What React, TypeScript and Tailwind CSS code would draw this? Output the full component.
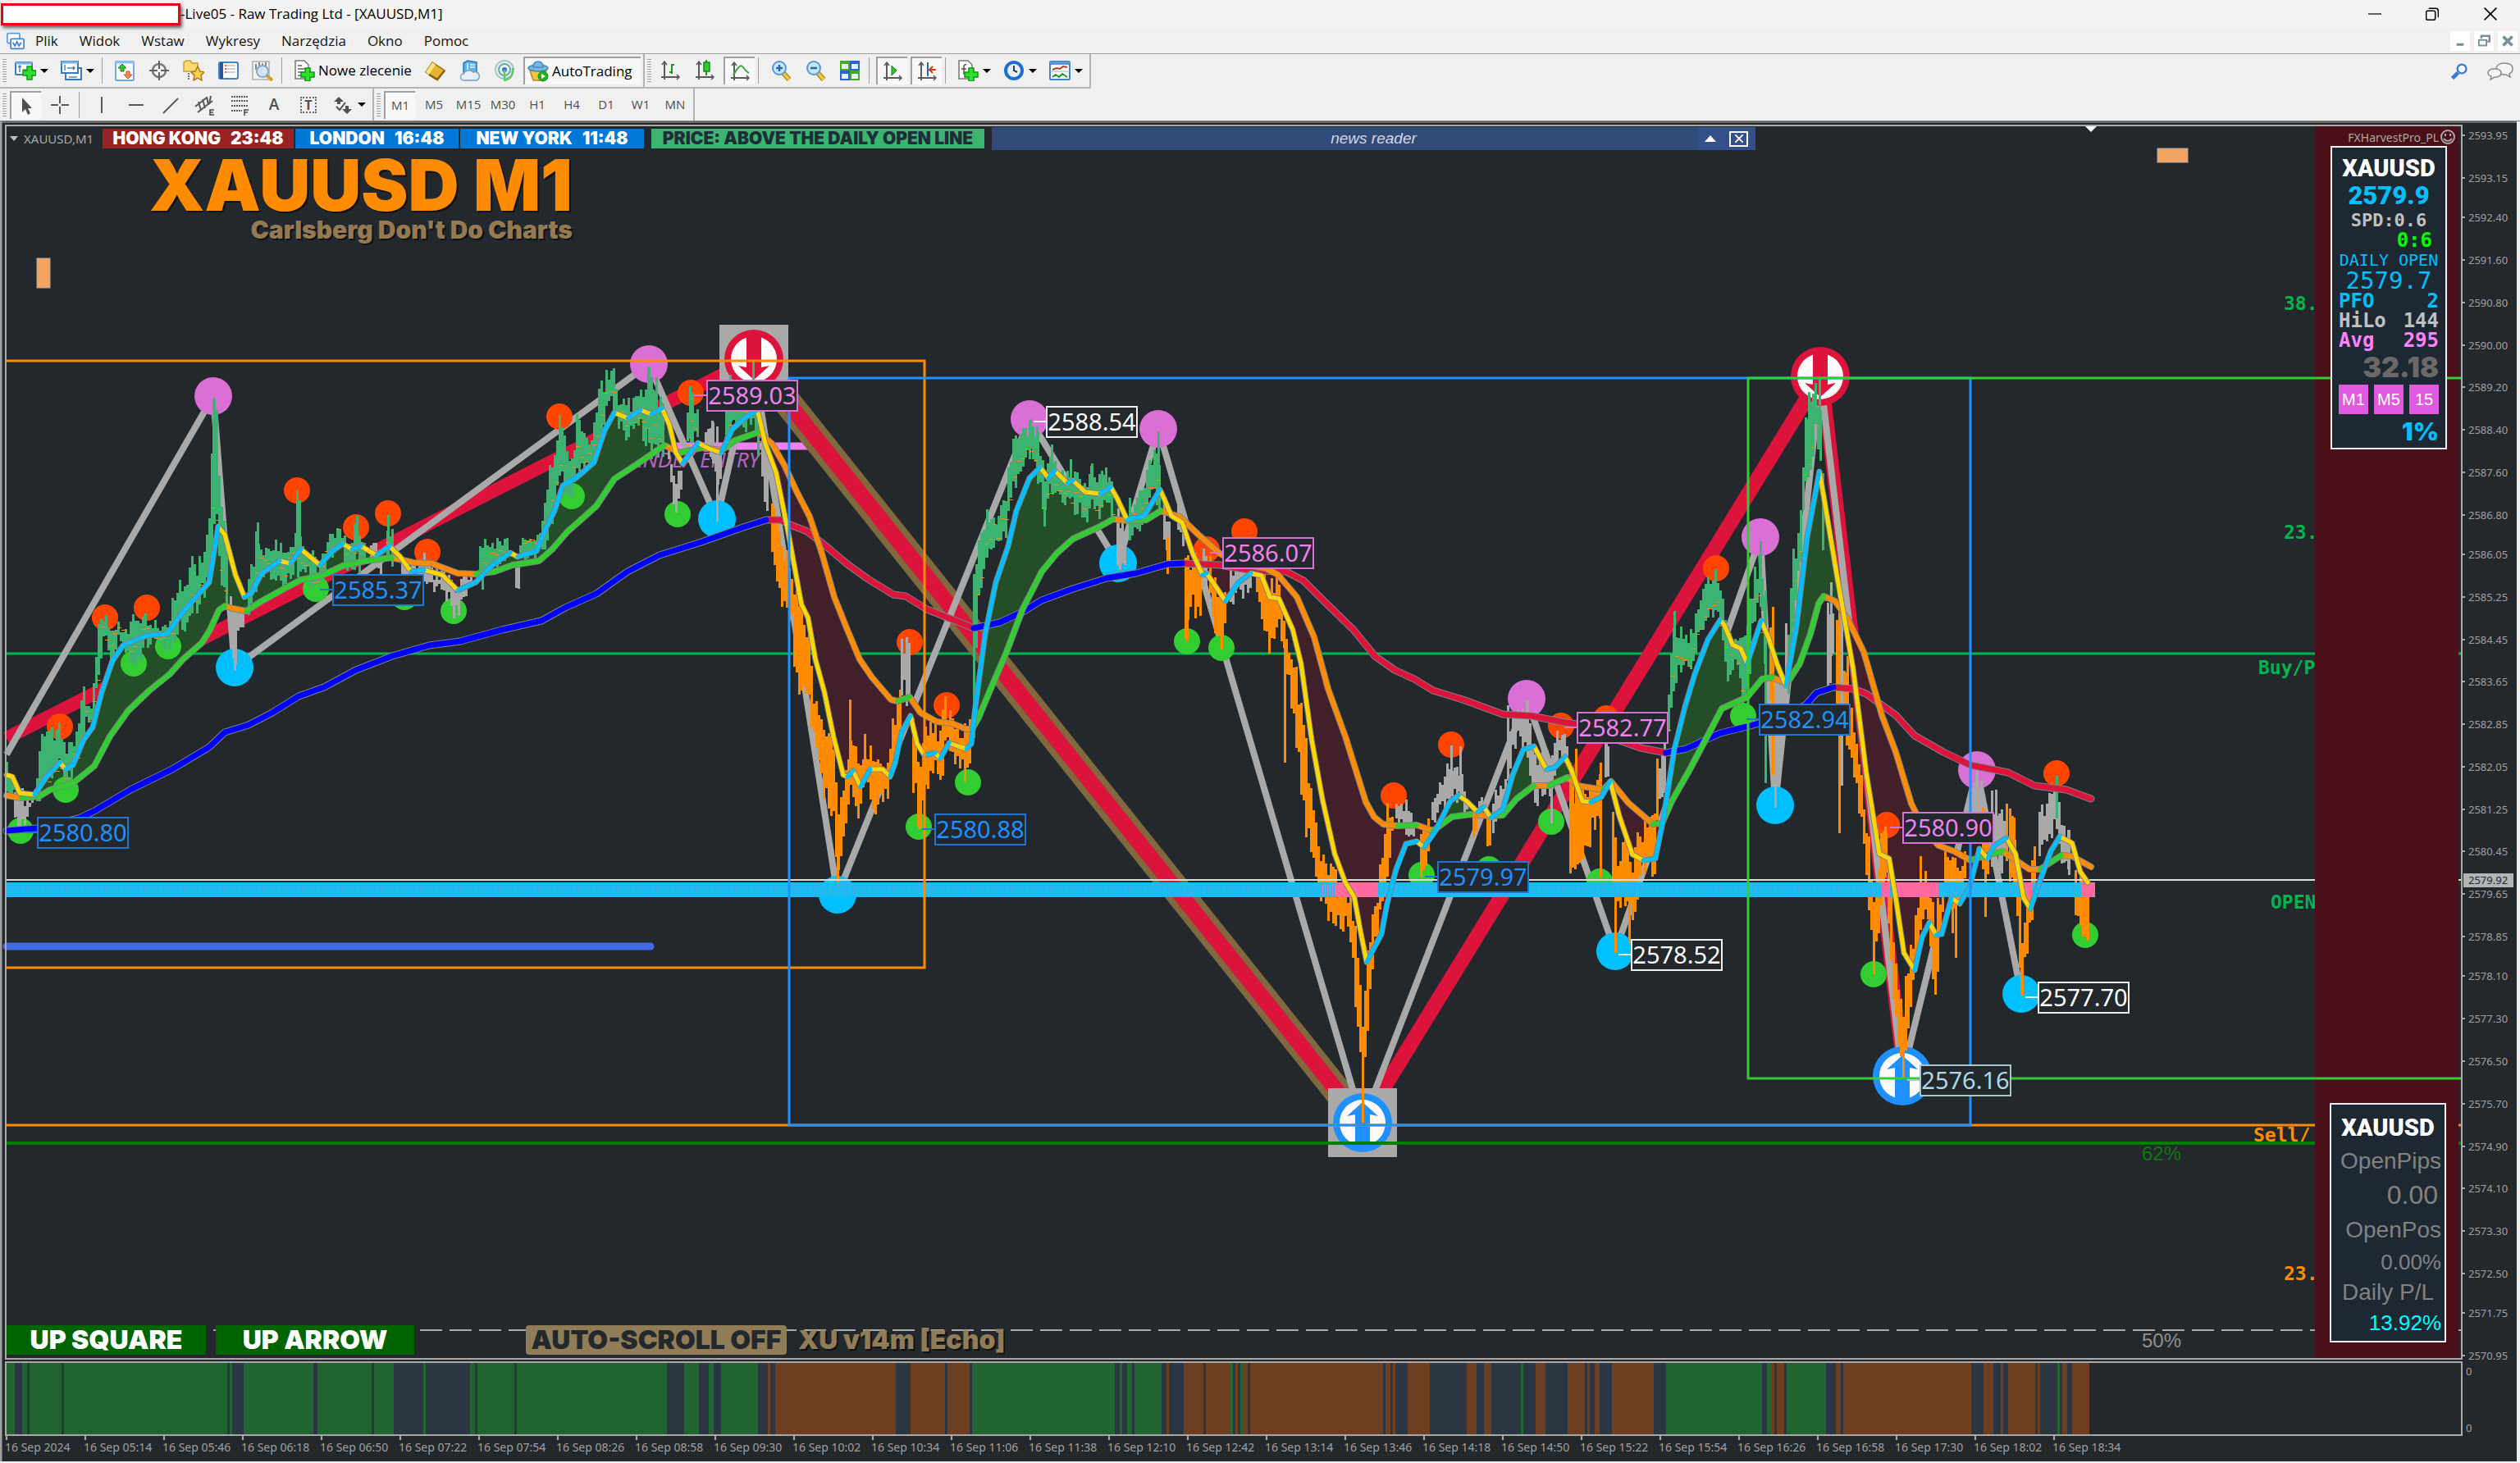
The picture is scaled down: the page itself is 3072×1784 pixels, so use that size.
import React from 'react';

type Point = [number, number];
type Candle = [number, number, number];

const GREEN = '#3cb371';
const GRAY = '#a9a9a9';
const ORANGE = '#ff8c00';

const fastMa: Point[] = [
  [8, 945], [15, 947], [24, 967], [42, 969], [57, 947], [73, 930], [80, 938], [89, 933], [102, 902], [113, 887], [124, 844], [137, 806],
  [150, 787], [179, 775], [204, 773], [220, 750], [239, 728], [255, 710], [266, 642], [274, 652], [287, 701], [298, 728], [306, 724],
  [319, 699], [341, 684], [354, 687], [367, 670], [390, 689], [405, 672], [418, 663], [429, 670], [440, 666], [459, 677], [475, 666],
  [488, 679], [501, 697], [517, 695], [539, 701], [558, 720], [580, 710], [599, 690], [622, 674], [631, 679], [654, 672], [666, 643],
  [676, 623], [686, 592], [702, 583], [724, 564], [737, 525], [749, 503], [765, 510], [781, 500], [794, 505], [807, 498], [816, 518],
  [824, 552], [832, 565], [851, 540], [864, 547], [879, 552], [893, 523], [909, 509], [922, 501], [924, 503], [933, 541], [946, 576],
  [961, 650], [977, 737], [985, 753], [994, 804], [1005, 844], [1016, 898], [1028, 945], [1033, 947], [1040, 940], [1049, 959],
  [1061, 938], [1076, 938], [1085, 947], [1091, 931], [1099, 893], [1110, 873], [1118, 907], [1127, 921], [1140, 918], [1146, 925],
  [1157, 906], [1168, 910], [1178, 913], [1184, 907], [1189, 862], [1201, 773], [1214, 710], [1229, 666], [1239, 623], [1255, 583],
  [1268, 570], [1278, 583], [1286, 574], [1301, 589], [1308, 586], [1323, 600], [1341, 602], [1354, 594], [1362, 608], [1374, 634],
  [1395, 629], [1414, 597], [1420, 610], [1428, 629], [1441, 637], [1454, 675], [1466, 701], [1471, 699], [1494, 733], [1510, 710],
  [1525, 699], [1538, 702], [1548, 728], [1559, 730], [1576, 768], [1586, 809], [1599, 902], [1612, 974], [1627, 1041], [1640, 1076],
  [1651, 1094], [1658, 1133], [1666, 1173], [1676, 1154], [1684, 1139], [1691, 1102], [1702, 1060], [1714, 1029], [1727, 1026],
  [1736, 1033], [1750, 1013], [1768, 977], [1778, 970], [1788, 977], [1801, 990], [1809, 984], [1817, 997], [1832, 987], [1844, 945],
  [1857, 914], [1870, 910], [1885, 938], [1895, 936], [1908, 923], [1916, 940], [1929, 977], [1939, 978], [1952, 972], [1963, 953],
  [1974, 995], [1990, 1042], [2003, 1049], [2018, 1047], [2028, 997], [2041, 914], [2054, 862], [2066, 822], [2082, 780], [2097, 756],
  [2102, 762], [2112, 786], [2122, 791], [2130, 809], [2147, 757], [2156, 778], [2166, 809], [2177, 836], [2190, 764], [2203, 655],
  [2218, 575], [2223, 604], [2239, 700], [2259, 815], [2275, 942], [2291, 1041], [2303, 1047], [2311, 1095], [2321, 1162],
  [2334, 1183], [2343, 1143], [2352, 1125], [2360, 1140], [2367, 1139], [2379, 1095], [2389, 1102], [2401, 1082], [2413, 1035],
  [2423, 1047], [2431, 1031], [2446, 1022], [2457, 1041], [2467, 1095], [2475, 1108], [2484, 1082], [2500, 1038], [2511, 1020],
  [2526, 1028], [2536, 1063], [2545, 1076],
];

const slowMa: Point[] = [
  [8, 970], [26, 973], [48, 971], [61, 963], [89, 955], [115, 934], [134, 898], [156, 867], [182, 842], [207, 822], [223, 804],
  [246, 784], [256, 768], [267, 744], [274, 739], [284, 742], [300, 745], [319, 733], [348, 717], [367, 707], [392, 702], [418, 690],
  [446, 684], [478, 680], [504, 686], [526, 687], [558, 699], [580, 700], [603, 697], [625, 689], [657, 684], [673, 670], [692, 648],
  [708, 634], [727, 617], [749, 584], [775, 567], [810, 543], [829, 552], [855, 546], [880, 549], [896, 537], [925, 527], [941, 541],
  [956, 567], [971, 599], [987, 630], [1002, 675], [1017, 728], [1033, 768], [1048, 804], [1063, 826], [1086, 853], [1094, 855],
  [1109, 850], [1122, 869], [1142, 880], [1160, 882], [1178, 889], [1185, 889], [1193, 875], [1206, 844], [1227, 795], [1247, 742],
  [1270, 697], [1288, 675], [1308, 657], [1339, 643], [1357, 633], [1374, 635], [1397, 634], [1415, 623], [1438, 630], [1461, 652],
  [1487, 675], [1512, 688], [1543, 693], [1558, 701], [1581, 728], [1602, 777], [1619, 840], [1640, 898], [1665, 978], [1675, 996],
  [1686, 1005], [1704, 1007], [1727, 1006], [1747, 1013], [1770, 996], [1793, 993], [1816, 995], [1832, 994], [1849, 974],
  [1870, 958], [1888, 958], [1911, 948], [1923, 958], [1954, 963], [1964, 953], [1985, 979], [2015, 1005], [2026, 1004], [2038, 977],
  [2059, 940], [2084, 893], [2099, 864], [2130, 850], [2148, 828], [2161, 826], [2178, 834], [2194, 809], [2207, 773], [2217, 736],
  [2223, 727], [2237, 733], [2252, 754], [2272, 795], [2294, 872], [2311, 917], [2330, 980], [2345, 1010], [2363, 1031],
  [2382, 1038], [2402, 1049], [2441, 1038], [2474, 1060], [2487, 1060], [2513, 1043], [2526, 1044], [2549, 1057],
];

const longMa: Point[] = [
  [8, 1013], [45, 1010], [96, 998], [115, 989], [159, 963], [210, 938], [255, 911], [274, 893], [303, 884], [332, 869], [364, 849],
  [395, 838], [434, 817], [478, 800], [523, 787], [561, 782], [612, 768], [660, 757], [689, 741], [727, 724], [765, 697], [804, 677],
  [855, 661], [906, 643], [934, 634], [951, 634], [966, 641], [984, 648], [1007, 666], [1033, 688], [1058, 706], [1089, 725],
  [1104, 727], [1130, 743], [1160, 755], [1187, 766], [1219, 759], [1247, 746], [1270, 732], [1308, 718], [1349, 705], [1385, 699],
  [1423, 688], [1441, 687], [1487, 689], [1528, 696], [1568, 697], [1589, 708], [1614, 733], [1650, 768], [1676, 800], [1700, 817],
  [1724, 828], [1747, 842], [1786, 854], [1832, 871], [1867, 873], [1908, 881], [1923, 883], [1974, 903], [2000, 912], [2031, 918],
  [2056, 913], [2097, 894], [2130, 886], [2144, 882], [2176, 874], [2202, 859], [2214, 845], [2235, 838], [2259, 840], [2275, 846],
  [2311, 872], [2334, 897], [2369, 917], [2402, 933], [2448, 942], [2480, 958], [2519, 963], [2549, 974],
];

// x, high, low
const candleRuns: { color: string; bars: Candle[] }[] = [
  { color: GREEN, bars: [[8, 935, 965], [17, 950, 968]] },
  { color: GRAY, bars: [[18, 965, 1000], [25, 975, 1008], [35, 975, 990], [42, 965, 975]] },
  { color: GREEN, bars: [[45, 945, 970], [52, 905, 960], [65, 905, 950], [73, 892, 935], [80, 925, 955], [90, 905, 935], [98, 860, 920], [102, 850, 885], [112, 865, 878], [118, 775, 850], [125, 765, 785], [130, 755, 780], [133, 762, 810], [145, 766, 778], [155, 765, 790], [160, 765, 805], [178, 752, 785], [190, 765, 780], [200, 772, 785], [210, 740, 790], [217, 705, 760], [222, 730, 770], [233, 685, 740], [240, 700, 735], [250, 670, 715], [257, 600, 690], [260, 500, 640], [263, 520, 620], [268, 610, 690], [275, 660, 730], [278, 700, 780]] },
  { color: GRAY, bars: [[281, 740, 780], [286, 750, 815], [290, 745, 780], [298, 730, 760]] },
  { color: GREEN, bars: [[303, 710, 750], [308, 690, 730], [313, 645, 700], [320, 670, 700], [330, 665, 695], [340, 665, 700], [348, 682, 712], [355, 670, 695], [362, 650, 690], [375, 672, 700], [385, 692, 720], [395, 680, 700], [400, 652, 680], [415, 650, 662], [425, 665, 695], [435, 645, 685], [445, 660, 685]] },
  { color: GRAY, bars: [[452, 662, 690], [465, 672, 695]] },
  { color: GREEN, bars: [[472, 640, 680], [480, 658, 685]] },
  { color: GRAY, bars: [[490, 682, 700], [505, 690, 712], [515, 680, 700], [523, 690, 712], [530, 702, 725], [540, 700, 712], [550, 708, 740], [556, 722, 745], [562, 710, 735], [575, 697, 715]] },
  { color: GREEN, bars: [[585, 672, 710], [592, 658, 700], [605, 662, 690], [620, 658, 680]] },
  { color: GRAY, bars: [[629, 680, 710]] },
  { color: GREEN, bars: [[634, 665, 680], [650, 660, 675], [660, 640, 670], [668, 582, 640], [675, 570, 615], [683, 512, 570], [690, 550, 600], [697, 560, 600], [703, 520, 560], [712, 535, 565], [722, 538, 560], [730, 482, 540], [738, 465, 495], [748, 455, 480], [755, 492, 520], [765, 500, 530], [775, 484, 515], [785, 490, 525], [791, 460, 535], [800, 480, 540], [808, 495, 545]] },
  { color: GRAY, bars: [[815, 540, 570], [820, 590, 615], [826, 592, 622], [832, 560, 600]] },
  { color: GREEN, bars: [[838, 495, 545], [843, 480, 530], [850, 505, 540]] },
  { color: GRAY, bars: [[860, 530, 560], [868, 525, 560], [875, 560, 600], [880, 550, 580]] },
  { color: GREEN, bars: [[885, 500, 540], [893, 470, 520], [905, 490, 520], [918, 470, 505], [925, 490, 550]] },
  { color: GRAY, bars: [[929, 520, 590], [936, 545, 630]] },
  { color: ORANGE, bars: [[941, 600, 660], [950, 650, 725], [965, 705, 760], [972, 740, 840], [985, 770, 850], [993, 855, 915], [1003, 900, 960], [1015, 910, 990], [1021, 990, 1065], [1030, 960, 1000], [1036, 900, 950], [1045, 935, 1000], [1055, 915, 950], [1065, 928, 980], [1080, 932, 970], [1090, 880, 925], [1097, 835, 880]] },
  { color: GRAY, bars: [[1099, 792, 838], [1108, 790, 845]] },
  { color: ORANGE, bars: [[1113, 870, 950], [1121, 960, 1005], [1128, 900, 960], [1138, 890, 930], [1145, 890, 960], [1153, 865, 910], [1165, 880, 920], [1178, 900, 950], [1183, 885, 940]] },
  { color: GREEN, bars: [[1187, 730, 880], [1192, 680, 740], [1200, 630, 690], [1205, 635, 660], [1215, 645, 660], [1225, 610, 650], [1235, 550, 595], [1243, 540, 575], [1255, 520, 550], [1265, 535, 575], [1273, 580, 630], [1280, 560, 600], [1292, 580, 605], [1303, 580, 615], [1315, 590, 620], [1325, 600, 630], [1330, 578, 610], [1340, 592, 630], [1348, 580, 600], [1357, 590, 635]] },
  { color: GRAY, bars: [[1362, 630, 680], [1372, 650, 690]] },
  { color: GREEN, bars: [[1377, 620, 650], [1390, 610, 640], [1400, 575, 615], [1408, 560, 600], [1414, 560, 610]] },
  { color: GRAY, bars: [[1419, 615, 650], [1425, 650, 680]] },
  { color: GRAY, bars: [[1436, 610, 650], [1442, 640, 670]] },
  { color: ORANGE, bars: [[1445, 680, 760], [1450, 685, 740], [1463, 685, 735]] },
  { color: GRAY, bars: [[1467, 670, 705]] },
  { color: ORANGE, bars: [[1475, 690, 730], [1487, 740, 790], [1495, 700, 750]] },
  { color: GRAY, bars: [[1500, 692, 730], [1525, 692, 715]] },
  { color: ORANGE, bars: [[1532, 690, 718], [1543, 720, 785], [1553, 725, 770], [1560, 712, 760], [1567, 770, 810], [1577, 810, 870], [1588, 880, 980], [1600, 990, 1050], [1610, 1040, 1085], [1628, 1080, 1130], [1640, 1090, 1120], [1650, 1120, 1190], [1656, 1190, 1270], [1661, 1250, 1340], [1666, 1175, 1260], [1672, 1120, 1170], [1680, 1090, 1130], [1690, 1000, 1070], [1697, 990, 1020]] },
  { color: GRAY, bars: [[1702, 972, 1000], [1715, 985, 1010], [1725, 1002, 1020]] },
  { color: ORANGE, bars: [[1732, 1015, 1055], [1741, 1000, 1035]] },
  { color: GRAY, bars: [[1746, 975, 1005], [1760, 950, 980], [1768, 930, 965], [1780, 950, 975], [1790, 980, 1000]] },
  { color: ORANGE, bars: [[1796, 988, 1015]] },
  { color: GRAY, bars: [[1803, 975, 995]] },
  { color: ORANGE, bars: [[1813, 995, 1030], [1817, 995, 1050]] },
  { color: GRAY, bars: [[1820, 982, 1010], [1835, 950, 975], [1840, 885, 930], [1850, 872, 900], [1862, 870, 920], [1872, 930, 970], [1880, 920, 970], [1890, 930, 960], [1900, 892, 920], [1910, 910, 930]] },
  { color: ORANGE, bars: [[1914, 945, 1050], [1925, 985, 1050], [1933, 965, 1030], [1945, 945, 1000], [1950, 950, 1000]] },
  { color: GRAY, bars: [[1957, 910, 940], [1962, 915, 940]] },
  { color: ORANGE, bars: [[1966, 985, 1090], [1971, 1050, 1110], [1980, 1020, 1090], [1988, 1060, 1120], [2000, 1020, 1070], [2010, 1010, 1050], [2018, 1000, 1070]] },
  { color: GRAY, bars: [[2023, 930, 980], [2030, 900, 960]] },
  { color: GREEN, bars: [[2034, 845, 895], [2041, 765, 820], [2050, 780, 815], [2060, 775, 815], [2070, 742, 780], [2078, 715, 760], [2091, 705, 740], [2098, 720, 760], [2107, 780, 825], [2115, 772, 800], [2125, 800, 855], [2130, 760, 850], [2137, 715, 760], [2146, 680, 720], [2151, 740, 820]] },
  { color: ORANGE, bars: [[2158, 780, 860], [2161, 800, 900]] },
  { color: GRAY, bars: [[2164, 850, 960], [2169, 820, 910], [2175, 810, 845]] },
  { color: GREEN, bars: [[2180, 770, 840], [2185, 690, 760], [2195, 640, 690], [2200, 510, 600], [2207, 500, 560], [2213, 485, 530], [2218, 490, 540], [2223, 600, 700]] },
  { color: GRAY, bars: [[2228, 740, 830], [2235, 740, 800]] },
  { color: ORANGE, bars: [[2239, 760, 880], [2248, 820, 880], [2258, 880, 930], [2268, 950, 1000], [2278, 1030, 1100], [2284, 1120, 1180], [2292, 1030, 1110], [2299, 1015, 1060], [2305, 1090, 1180], [2312, 1200, 1265], [2319, 1250, 1300], [2325, 1190, 1250], [2332, 1150, 1200], [2340, 1080, 1130], [2348, 1060, 1110], [2358, 1130, 1200], [2365, 1100, 1150], [2372, 1040, 1070], [2380, 1050, 1120], [2388, 1070, 1110], [2397, 1030, 1070]] },
  { color: GRAY, bars: [[2403, 985, 1030], [2408, 960, 1000], [2415, 960, 1010]] },
  { color: ORANGE, bars: [[2420, 1020, 1080]] },
  { color: GRAY, bars: [[2428, 980, 1040], [2443, 1000, 1050]] },
  { color: ORANGE, bars: [[2450, 1005, 1060], [2458, 1030, 1110], [2465, 1150, 1200], [2472, 1090, 1150], [2480, 1050, 1095]] },
  { color: GRAY, bars: [[2486, 1000, 1035], [2500, 975, 1010], [2508, 960, 1000], [2515, 1020, 1055], [2524, 1025, 1060]] },
  { color: ORANGE, bars: [[2530, 1070, 1120], [2547, 1085, 1135]] },
];

// long single wicks: x, from, to
const wicks: [string, number, number, number][] = [
  [GREEN, 260, 485, 620], [GREEN, 264, 500, 600], [GRAY, 286, 740, 818], [GREEN, 362, 598, 680], [GREEN, 365, 610, 670],
  [GREEN, 473, 628, 680], [GREEN, 314, 637, 700], [GREEN, 682, 510, 580], [GREEN, 703, 505, 570], [GREEN, 748, 449, 500],
  [GREEN, 791, 447, 540], [GREEN, 794, 460, 560], [GREEN, 800, 460, 540], [GREEN, 842, 480, 540], [GRAY, 874, 520, 636],
  [GRAY, 868, 513, 560], [GRAY, 22, 970, 1010], [GREEN, 918, 440, 510], [GREEN, 890, 457, 520], [ORANGE, 1021, 1000, 1091],
  [ORANGE, 1036, 853, 930], [ORANGE, 1054, 895, 950], [ORANGE, 1120, 980, 1011], [GRAY, 1108, 784, 850], [GREEN, 1187, 700, 900],
  [GREEN, 1203, 621, 680], [GREEN, 1255, 514, 560], [GREEN, 1264, 520, 570], [GREEN, 1282, 542, 600], [GREEN, 1305, 560, 600],
  [GREEN, 1330, 568, 600], [GREEN, 1348, 570, 600], [GREEN, 1412, 526, 600], [GREEN, 1273, 590, 642], [GRAY, 1363, 620, 690],
  [ORANGE, 1423, 655, 700], [ORANGE, 1447, 700, 782], [ORANGE, 1489, 740, 792], [ORANGE, 1661, 1280, 1369], [ORANGE, 1667, 1180, 1250],
  [GRAY, 1769, 909, 960], [GRAY, 1780, 910, 970], [GRAY, 1861, 853, 900], [GRAY, 1838, 860, 920], [GRAY, 1891, 940, 1004],
  [ORANGE, 1921, 913, 1040], [ORANGE, 1951, 930, 1070], [ORANGE, 1969, 1060, 1162], [ORANGE, 1986, 1080, 1150], [GRAY, 1958, 880, 940],
  [ORANGE, 2020, 925, 1000], [GREEN, 2041, 745, 820], [GREEN, 2091, 694, 740], [GREEN, 2146, 660, 740], [GREEN, 2152, 720, 955],
  [ORANGE, 2161, 740, 945], [GRAY, 2164, 830, 985], [GRAY, 2177, 760, 840], [GREEN, 2218, 462, 540], [GREEN, 2205, 478, 540],
  [ORANGE, 2242, 720, 1016], [GRAY, 2245, 740, 958], [GRAY, 2232, 710, 800], [ORANGE, 2252, 800, 880], [ORANGE, 2284, 1100, 1188],
  [ORANGE, 2298, 1008, 1070], [ORANGE, 2320, 1240, 1314], [ORANGE, 2341, 1044, 1120], [ORANGE, 2359, 1140, 1213], [ORANGE, 2384, 1060, 1168],
  [GRAY, 2410, 940, 1000], [GRAY, 2433, 963, 1040], [ORANGE, 2417, 985, 1060], [ORANGE, 2446, 980, 1050], [ORANGE, 2455, 997, 1080],
  [ORANGE, 2464, 1150, 1214], [ORANGE, 2420, 1060, 1118], [GREEN, 2507, 946, 998], [GRAY, 2501, 968, 1010], [GRAY, 2521, 1012, 1060],
  [ORANGE, 2542, 1100, 1142], [ORANGE, 1566, 790, 930], [ORANGE, 1592, 900, 998],
];

const dots: [string, number, Point[]][] = [
  ['#da70d6', 23, [[260, 483], [791, 444], [1255, 511], [1412, 523], [1861, 852], [2146, 655], [2410, 939]]],
  ['#00bfff', 23, [[286, 814], [874, 633], [1363, 687], [1021, 1091], [1969, 1160], [2164, 982], [2464, 1212]]],
  ['#ff4500', 16, [[73, 886], [128, 753], [179, 741], [362, 598], [434, 643], [473, 626], [521, 673], [682, 508], [842, 479], [1109, 783], [1154, 860], [1471, 670], [1517, 648], [1699, 970], [1769, 908], [1903, 885], [1958, 876], [2092, 693], [2300, 1006], [2507, 943]]],
  ['#32cd32', 16, [[25, 1013], [80, 963], [163, 809], [205, 788], [385, 718], [493, 728], [553, 745], [697, 605], [826, 627], [1120, 1008], [1180, 954], [1447, 782], [1489, 790], [1733, 1067], [1815, 1060], [1891, 1002], [1950, 1075], [2125, 873], [2284, 1188], [2542, 1140]]],
];

const zigzag = '8,920 260,483 286,814 791,444 874,633 918,438 1021,1091 1255,511 1363,687 1412,523 1661,1369 1861,852 1969,1160 2146,655 2164,982 2219,459 2319,1312 2410,939 2464,1212';

// left, top, colour, text, text colour
const tags: [number, number, string, string, string][] = [
  [862, 464, '#da70d6', '2589.03', '#ee82ee'],
  [406, 701, '#1e78d2', '2585.37', '#1e90ff'],
  [46, 997, '#1e78d2', '2580.80', '#1e90ff'],
  [1276, 496, '#f0f0f0', '2588.54', '#ffffff'],
  [1491, 656, '#da70d6', '2586.07', '#ee82ee'],
  [1140, 993, '#1e78d2', '2580.88', '#1e90ff'],
  [1923, 869, '#da70d6', '2582.77', '#ee82ee'],
  [1753, 1051, '#1e78d2', '2579.97', '#1e90ff'],
  [1989, 1146, '#f0f0f0', '2578.52', '#ffffff'],
  [2145, 859, '#1e78d2', '2582.94', '#1e90ff'],
  [2320, 991, '#da70d6', '2580.90', '#ee82ee'],
  [2485, 1198, '#f0f0f0', '2577.70', '#ffffff'],
  [2341, 1299, '#a5c8c8', '2576.16', '#add8e6'],
];

const prices = [
  '2593.95', '2593.15', '2592.40', '2591.60', '2590.80', '2590.00', '2589.20', '2588.40', '2587.60', '2586.80', '2586.05', '2585.25',
  '2584.45', '2583.65', '2582.85', '2582.05', '2581.25', '2580.45', '2579.65', '2578.85', '2578.10', '2577.30', '2576.50', '2575.70',
  '2574.90', '2574.10', '2573.30', '2572.50', '2571.75', '2570.95',
];

const times = [
  '16 Sep 2024', '16 Sep 05:14', '16 Sep 05:46', '16 Sep 06:18', '16 Sep 06:50', '16 Sep 07:22', '16 Sep 07:54', '16 Sep 08:26',
  '16 Sep 08:58', '16 Sep 09:30', '16 Sep 10:02', '16 Sep 10:34', '16 Sep 11:06', '16 Sep 11:38', '16 Sep 12:10', '16 Sep 12:42',
  '16 Sep 13:14', '16 Sep 13:46', '16 Sep 14:18', '16 Sep 14:50', '16 Sep 15:22', '16 Sep 15:54', '16 Sep 16:26', '16 Sep 16:58',
  '16 Sep 17:30', '16 Sep 18:02', '16 Sep 18:34',
];

// colour key + right edge; each strip starts where the one before ends
const strips =
  'g18 s27 g33 s36 g75 s78 g277 s280 g283 s297 g382 s387 g453 s456 g480 s516 g519 s573 g579 s582 g627 s630 g813 s834 g852 s864 g870 s879 g924 s936 b939 s945 b1092 s1110 b1152 s1155 b1182 s1185 g1359 s1365 g1368 s1374 g1380 s1383 g1416 s1422 b1425 s1443 b1467 s1470 b1500 g1503 s1506 b1509 s1512 g1515 b1521 s1524 b1686 s1689 b1695 s1698 b1701 s1716 b1743 s1788 b1800 s1809 b1818 s1854 g1857 s1872 b1884 s1911 b1932 s1935 b1938 s1944 b1950 s1965 b2016 s2031 g2148 s2154 g2160 b2163 s2166 b2175 s2178 g2226 s2238 b2244 s2247 b2403 s2418 b2430 s2439 b2442 s2448 b2481 s2484 b2487 s2508 g2511 s2514 b2520 s2526 b2547'.split(' ');
const stripColors: Record<string, string> = { g: '#206432', s: '#2a3743', b: '#6e3e20' };

const noise = (n: number) => {
  const v = Math.sin(n * 12.9898) * 43758.5453;
  return v - Math.floor(v);
};

const valueAt = (line: Point[], x: number) => {
  for (let i = 1; i < line.length; i++) {
    if (x <= line[i][0]) {
      const [x0, y0] = line[i - 1];
      const [x1, y1] = line[i];
      return y0 + ((y1 - y0) * (x - x0)) / (x1 - x0);
    }
  }
  return line[line.length - 1][1];
};

const toPath = (line: Point[]) => line.map(([x, y], i) => `${i ? 'L' : 'M'}${x} ${y}`).join('');

const candlePath = (bars: Candle[]) => {
  let d = '';
  const end = Math.max(bars[bars.length - 1][0], bars[0][0] + 5);
  const highs = bars.map((b): Point => [b[0], b[1]]);
  const lows = bars.map((b): Point => [b[0], b[2]]);
  for (let x = bars[0][0]; x <= end; x += 3) {
    const high = bars.length > 1 ? valueAt(highs, x) : bars[0][1];
    const low = bars.length > 1 ? valueAt(lows, x) : bars[0][2];
    const swing = Math.min(34, (low - high) * 0.5 + 8);
    d += `M${x} ${Math.round(high + (noise(x) - 0.6) * swing)}V${Math.round(low + (noise(x + 7) - 0.45) * swing)}`;
  }
  return d;
};

const tickPath = (bars: Candle[]) => {
  let d = '';
  const lows = bars.map((b): Point => [b[0], b[2]]);
  for (let x = bars[0][0]; x <= bars[bars.length - 1][0]; x += 5) {
    d += `M${x - 2} ${Math.round(valueAt(lows, x) - noise(x + 3) * 22)}h5`;
  }
  return d;
};

const ribbon = (above: boolean) => {
  let d = '';
  for (let x = 8; x < 2546; x += 2) {
    const fast = valueAt(fastMa, x);
    const slow = valueAt(slowMa, x);
    if (fast < slow === above) d += `M${x} ${fast.toFixed(1)}V${slow.toFixed(1)}`;
  }
  return d;
};

const MovingAverage = ({ line, up, down, width }: { line: Point[]; up: string; down: string; width: number }) => {
  let rising = '';
  let falling = '';
  for (let i = 1; i < line.length; i++) {
    const piece = `M${line[i - 1].join(' ')}L${line[i].join(' ')}`;
    if (line[i][1] < line[i - 1][1]) rising += piece;
    else falling += piece;
  }
  return (
    <g fill="none" strokeLinecap="round" strokeLinejoin="round">
      <path d={toPath(line)} stroke="#808080" strokeWidth={width + 2} />
      <path d={falling} stroke={down} strokeWidth={width} />
      <path d={rising} stroke={up} strokeWidth={width} />
    </g>
  );
};

const SignalArrow = ({ x, y, color, up, framed }: { x: number; y: number; color: string; up?: boolean; framed?: boolean }) => (
  <g transform={`translate(${x} ${y})`}>
    {framed && <rect x="-42" y="-42" width="84" height="84" fill="#a9a9a9" />}
    <circle r="36" fill={color} />
    <circle r="28" fill="#fffafa" />
    <path d="M-9 31V-10L-19 -8L0 -25L19 -8L9 -10V31Z" fill={color} transform={up ? undefined : 'scale(1 -1)'} />
  </g>
);

const Chart = () => (
  <svg viewBox="0 148 3072 1636" className="block w-full h-auto font-['Noto_Sans',sans-serif]" role="img" aria-label="XAUUSD M1">
    <rect x="0" y="148" width="3072" height="1636" fill="#23282c" />

    <path d="M8 797H3001" stroke="#00b450" strokeWidth="3" />
    <path d="M8 1154H793" stroke="#4169e1" strokeWidth="9" strokeLinecap="round" />
    <path d="M822 544H988" stroke="#ee82ee" strokeWidth="9" />
    <text x="775" y="570" fontSize="26" fontStyle="italic" fill="#b464be">INDEX ENTRY</text>

    <g fill="none">
      <path d="M8 900L918 438" stroke="#dc143c" strokeWidth="16" />
      <path d="M918 438L1661 1369" stroke="#80683f" strokeWidth="34" />
      <path d="M918 438L1661 1369" stroke="#dc143c" strokeWidth="19" />
      <path d="M1661 1369L2219 459" stroke="#dc143c" strokeWidth="18" />
      <path d="M2221 459L2321 1312" stroke="#dc143c" strokeWidth="16" />
      <polyline points={zigzag} stroke="#a9a9a9" strokeWidth="8" />
    </g>

    <path d={ribbon(true)} stroke="#234e28" strokeWidth="3" />
    <path d={ribbon(false)} stroke="#41202a" strokeWidth="3" />

    {dots.map(([color, r, points]) =>
      points.map(([x, y]) => <circle key={`${x}-${y}`} cx={x} cy={y} r={r} fill={color} />)
    )}
    <SignalArrow x={919} y={438} color="#dc143c" framed />
    <SignalArrow x={1661} y={1369} color="#1e90ff" up framed />
    <SignalArrow x={2219} y={459} color="#dc143c" />
    <SignalArrow x={2319} y={1312} color="#1e90ff" up />

    <g shapeRendering="crispEdges" strokeWidth="3">
      {candleRuns.map((run, i) => (
        <path key={i} d={candlePath(run.bars)} stroke={run.color} />
      ))}
      {wicks.map(([color, x, from, to], i) => (
        <path key={i} d={`M${x} ${from}V${to}`} stroke={color} />
      ))}
      {candleRuns
        .filter((run) => run.color === GREEN && run.bars.length > 1)
        .map((run, i) => (
          <path key={i} d={tickPath(run.bars)} stroke={ORANGE} strokeWidth="1" />
        ))}
    </g>

    <path d="M8 1073H3001" stroke="#dcdcdc" strokeWidth="2" />
    <g fill="none">
      <path d="M8 1085H2554" stroke="#14bef5" strokeWidth="18" />
      <path d="M8 1085H2554" stroke="#3cb4eb" strokeWidth="14" strokeDasharray="1 2" />
      <path d="M1612 1085H1628" stroke="#c882c8" strokeWidth="16" strokeDasharray="1 2" />
      <path d="M1628 1085H1680M2294 1085H2304M2311 1085H2363M2467 1085H2477M2537 1085H2554" stroke="#ff69a0" strokeWidth="18" />
    </g>

    <MovingAverage line={longMa} up="#0000ff" down="#dc143c" width={7} />
    <MovingAverage line={slowMa} up="#32cd32" down="#ff8c00" width={6} />
    <MovingAverage line={fastMa} up="#00bfff" down="#ffd700" width={5} />

    <g fill="none" strokeWidth="3">
      <path d="M8 440H1127V1180H8" stroke="#ff8c00" />
      <path d="M8 1372H3001" stroke="#ff8c00" />
      <rect x="962" y="461" width="1440" height="911" stroke="#1e90ff" />
    </g>

    <g className="font-['DejaVu_Sans_Mono',monospace]" fontSize="23" fontWeight="700">
      <g fill="#00b450">
        <text x="2784" y="378">38.</text>
        <text x="2784" y="657">23.</text>
        <text x="2753" y="822">Buy/P</text>
        <text x="2768" y="1108">OPEN</text>
      </g>
      <g fill="#ff8c00">
        <text x="2747" y="1392">Sell/</text>
        <text x="2784" y="1561">23.</text>
      </g>
    </g>
    <path d="M8 1394H3001" stroke="#008000" strokeWidth="4" />
    <path d="M8 1622H3001" stroke="#a9a9a9" strokeWidth="2" strokeDasharray="27 9" />
    <g className="font-['Liberation_Sans',sans-serif]" fontSize="24">
      <text x="2611" y="1415" fill="#0f780f">62%</text>
      <text x="2611" y="1643" fill="#909090">50%</text>
    </g>

    <g fill="#f4a460" stroke="#a9a9a9">
      <rect x="2630" y="181" width="37" height="17" />
      <rect x="45" y="315" width="16" height="36" />
    </g>
    <path d="M2541 153H2557L2549 161Z" fill="#ffffff" />

    <rect x="2822" y="154" width="175" height="1503" fill="#4a0f19" />
    <path d="M3001 461H2131V1315H3001" fill="none" stroke="#32cd32" strokeWidth="3" />
    <text x="2973" y="173" fontSize="14" textAnchor="end" fill="#a9a9a9">FXHarvestPro_PL</text>
    <g stroke="#a9a9a9" strokeWidth="2" fill="none">
      <circle cx="2984" cy="167" r="8" />
      <path d="M2979 169Q2984 175 2989 169M2981 163V166M2987 163V166" />
    </g>

    {tags.map(([x, y, border, label, color]) => (
      <g key={label}>
        <path d={`M${x - 16} ${y + 18}H${x}`} stroke={border} strokeWidth="2" />
        <rect x={x} y={y} width="110" height="37" fill="#23282c" stroke={border} strokeWidth="2" />
        <text x={x + 55} y={y + 29} fontSize="29" textAnchor="middle" fill={color}>
          {label}
        </text>
      </g>
    ))}

    {strips.map((strip, i) => {
      const start = i ? Number(strips[i - 1].slice(1)) : 8;
      return (
        <rect key={strip} x={start} y="1662" width={Number(strip.slice(1)) - start} height="87" fill={stripColors[strip[0]]} shapeRendering="crispEdges" />
      );
    })}

    <g fill="none" stroke="#a9a9a9" strokeWidth="2" shapeRendering="crispEdges">
      <path d="M7 153H3001V1657H7Z" />
      <path d="M7 1661H3001V1750H7Z" />
      {prices.map((p) => (
        <path key={p} d={`M3001 ${Math.round(165 + (2593.95 - Number(p)) * 64.7)}h4`} />
      ))}
      {times.map((t, i) => (
        <path key={t} d={`M${8 + i * 96} 1750v6`} />
      ))}
    </g>

    <g fontSize="13" fill="#a0a0a0">
      {prices.map((p) => (
        <text key={p} x="3009" y={Math.round(170 + (2593.95 - Number(p)) * 64.7)}>
          {p}
        </text>
      ))}
      <text x="3006" y="1677">0</text>
      <text x="3006" y="1746">0</text>
    </g>
    <rect x="3003" y="1065" width="61" height="17" fill="#b4b4b4" />
    <text x="3009" y="1078" fontSize="13" fill="#23282c">2579.92</text>
    <g fontSize="14" fill="#a0a0a0">
      {times.map((t, i) => (
        <text key={t} x={6 + i * 96} y="1770">
          {t}
        </text>
      ))}
    </g>

    <path d="M0 149H3069" stroke="#696969" strokeWidth="2" />
    <path d="M1 148V1784" stroke="#a0a0a0" strokeWidth="3" />
    <path d="M3070 148V1784" stroke="#f0f0f0" strokeWidth="4" />
    <path d="M0 1783H3072" stroke="#f0f0f0" strokeWidth="2" />
  </svg>
);

const Icon = ({ children, className = 'size-[26px]' }: { children: React.ReactNode; className?: string }) => (
  <svg viewBox="0 0 26 26" className={`${className} shrink-0`} fill="none" aria-hidden="true">
    {children}
  </svg>
);

const Plus = ({ x, y }: { x: number; y: number }) => (
  <path transform={`translate(${x} ${y})`} d="M-3 -8H3V-3H8V3H3V8H-3V3H-8V-3H-3Z" fill="#2ee02e" stroke="#0f9614" strokeWidth="1.5" />
);

const Axes = () => (
  <g stroke="#5a5a5a" strokeWidth="2">
    <path d="M6 3V24M2 21H24" />
    <path d="M3 6L6 2L9 6M21 18L24 21L21 24" strokeWidth="1.5" />
  </g>
);

const Magnifier = ({ plus }: { plus?: boolean }) => (
  <Icon>
    <path d="M16 16L23 24" stroke="#9a7412" strokeWidth="6" />
    <path d="M16 16L23 24" stroke="#f0c83c" strokeWidth="4" />
    <circle cx="11" cy="10" r="8" fill="#c8e6fa" stroke="#5a96dc" strokeWidth="2" />
    <path d={plus ? 'M11 6V14M7 10H15' : 'M7 10H15'} stroke="#2864aa" strokeWidth="2.5" />
  </Icon>
);

const icons = {
  newChart: (
    <Icon>
      <rect x="1" y="3" width="20" height="15" rx="1" fill="#fff" stroke="#3c78be" strokeWidth="2" />
      <path d="M1 4H21" stroke="#78afe6" strokeWidth="3" />
      <path d="M6 7V15M4 9L6 7L8 9M10 12H14" stroke="#5082b4" strokeWidth="1.5" />
      <Plus x={18} y={16} />
    </Icon>
  ),
  profiles: (
    <Icon>
      <rect x="6" y="10" width="19" height="14" fill="#fff" stroke="#3c78be" strokeWidth="2" />
      <rect x="1" y="2" width="20" height="14" fill="#fff" stroke="#3c78be" strokeWidth="2" />
      <path d="M1 3H21" stroke="#78afe6" strokeWidth="3" />
      <path d="M5 6V13M8 10H17M15 8L17 10L15 12M10 21H20" stroke="#5082b4" strokeWidth="1.5" />
    </Icon>
  ),
  market: (
    <Icon>
      <rect x="2" y="2" width="22" height="23" rx="1" fill="#fff" stroke="#6eaae6" strokeWidth="2" />
      <path d="M2 3H24" stroke="#8cc3f5" strokeWidth="3" />
      <path d="M10 5L15 10H12V14H8V10H5Z" fill="#32c832" stroke="#148214" />
      <path d="M17 23L12 18H15V14H19V18H22Z" fill="#ff8c50" stroke="#d2461e" />
    </Icon>
  ),
  crosshair: (
    <Icon>
      <circle cx="13" cy="13" r="8" stroke="#787878" strokeWidth="2.5" />
      <path d="M13 1V11M13 15V25M1 13H11M15 13H25" stroke="#646464" strokeWidth="2" />
    </Icon>
  ),
  navigator: (
    <Icon>
      <path d="M1 3L4 1H9L11 4H18V14H1Z" fill="#fadc6e" stroke="#c8a032" strokeWidth="1.5" />
      <path d="M7 16V25" stroke="#505050" strokeWidth="1.5" strokeDasharray="2 1" />
      <path d="M18 8L21 14L26 15L22 19L23 25L18 22L13 25L14 19L10 15L15 14Z" fill="#fad250" stroke="#aa7d14" strokeWidth="1.5" />
    </Icon>
  ),
  terminal: (
    <Icon>
      <rect x="2" y="3" width="23" height="20" rx="2" fill="#fff" stroke="#4682c8" strokeWidth="2" />
      <path d="M5 3V23" stroke="#28589b" strokeWidth="4" />
      <path d="M10 7H22M10 11H22M10 15H22" stroke="#a0a0a0" strokeWidth="1" />
      <path d="M10 6V18" stroke="#dc3c3c" strokeWidth="1.5" strokeDasharray="2 2" />
    </Icon>
  ),
  tester: (
    <Icon>
      <rect x="1" y="2" width="20" height="22" fill="#f5f5f0" stroke="#afafaf" strokeWidth="1.5" />
      <path d="M5 5V12M9 3V10M13 4V8M17 3V9" stroke="#646464" strokeWidth="1.5" />
      <path d="M18 19L25 25" stroke="#d2a028" strokeWidth="4" />
      <circle cx="13" cy="14" r="7" fill="#c8e1f5c0" stroke="#82aad2" strokeWidth="2" />
    </Icon>
  ),
  order: (
    <Icon>
      <path d="M2 1H13L18 6V23H2Z" fill="#fff" stroke="#787878" strokeWidth="1.5" />
      <path d="M5 7H10M5 11H15M5 15H12M5 19H9" stroke="#646464" strokeWidth="1.5" />
      <Plus x={17} y={18} />
    </Icon>
  ),
  gold: (
    <Icon>
      <path d="M1 15L9 3L24 13L15 24Z" fill="#e6b432" stroke="#a06e0f" strokeWidth="1.5" />
      <path d="M1 15L9 3L13 6L5 18Z" fill="#fae182" />
      <path d="M5 18L15 24L24 13" stroke="#8c5f0a" strokeWidth="2.5" />
    </Icon>
  ),
  cloud: (
    <Icon>
      <path d="M5 4L10 1L21 3V15H5Z" fill="#5ab4f0" stroke="#2878c8" strokeWidth="1.5" />
      <path d="M10 4V14M13 6H19M13 9H19" stroke="#e6f5ff" strokeWidth="1.5" />
      <path d="M6 25A4 4 0 0 1 5 17A7 6 0 0 1 17 15A5 5 0 0 1 21 25Z" fill="#e6eef8" stroke="#829bb9" strokeWidth="1.5" />
    </Icon>
  ),
  signal: (
    <Icon>
      <circle cx="13" cy="12" r="11" stroke="#a5c8c8" strokeWidth="2" />
      <circle cx="13" cy="12" r="7" stroke="#64aaaa" strokeWidth="2" />
      <circle cx="13" cy="12" r="3" fill="#2878d2" />
      <path d="M13 12V25Q24 23 23 10" stroke="#64c864" strokeWidth="2.5" />
    </Icon>
  ),
  robot: (
    <Icon>
      <path d="M3 12H23L19 24H7Z" fill="#f0c846" stroke="#b48c1e" strokeWidth="1.5" />
      <ellipse cx="13" cy="9" rx="12" ry="4" fill="#78b9e1" stroke="#468cb9" strokeWidth="1.5" />
      <path d="M7 8Q7 1 13 1Q19 1 19 8Z" fill="#78b9e1" stroke="#468cb9" strokeWidth="1.5" />
      <circle cx="19" cy="19" r="6" fill="#1eb41e" stroke="#0f8c0f" />
      <path d="M17 16L22 19L17 22Z" fill="#fff" />
    </Icon>
  ),
  bars: (
    <Icon>
      <Axes />
      <path d="M15 5V17M15 6H18M12 15H15" stroke="#1e961e" strokeWidth="2" />
    </Icon>
  ),
  candles: (
    <Icon>
      <Axes />
      <path d="M15 0V19" stroke="#1e961e" strokeWidth="2" />
      <rect x="12" y="3" width="7" height="11" fill="#28d228" stroke="#148c14" strokeWidth="1.5" />
    </Icon>
  ),
  line: (
    <Icon>
      <Axes />
      <path d="M5 18Q13 2 17 8T24 15" stroke="#46a046" strokeWidth="2" />
    </Icon>
  ),
  tile: (
    <Icon>
      <rect x="1" y="1" width="12" height="12" fill="#46aa1e" />
      <rect x="13" y="1" width="12" height="12" fill="#2864d2" />
      <rect x="1" y="13" width="12" height="12" fill="#2864d2" />
      <rect x="13" y="13" width="12" height="12" fill="#46aa1e" />
      <path d="M3 5H11V11H3ZM15 5H23V11H15ZM3 17H11V23H3ZM15 17H23V23H15Z" fill="#e6f0fa" />
    </Icon>
  ),
  scroll: (
    <Icon>
      <Axes />
      <path d="M12 6L18 12L12 18Z" fill="#32be32" stroke="#148214" />
    </Icon>
  ),
  shift: (
    <Icon>
      <Axes />
      <path d="M14 2V19" stroke="#2864aa" strokeWidth="2" />
      <path d="M24 11H17M20 7L16 11L20 15" stroke="#c83c0a" strokeWidth="2" />
    </Icon>
  ),
  indicators: (
    <Icon>
      <path d="M2 1H13L18 6V23H2Z" fill="#fff" stroke="#787878" strokeWidth="1.5" />
      <path d="M11 6Q8 5 8 9V18M5 11H11" stroke="#505050" strokeWidth="1.5" />
      <Plus x={17} y={18} />
    </Icon>
  ),
  clock: (
    <Icon>
      <circle cx="13" cy="13" r="10" fill="#e6f0fa" stroke="#1e6ed2" strokeWidth="4" />
      <path d="M13 7V13L17 15" stroke="#3c3c3c" strokeWidth="2" />
    </Icon>
  ),
  template: (
    <Icon>
      <rect x="1" y="2" width="24" height="22" rx="1" fill="#fff" stroke="#4682c8" strokeWidth="2" />
      <path d="M1 4H25" stroke="#5a96dc" strokeWidth="4" />
      <path d="M4 12L9 10L13 11L17 8L22 9" stroke="#b43c1e" strokeWidth="2" />
      <path d="M1 14H25" stroke="#8cb4dc" />
      <path d="M4 21L8 18L12 21L16 17L22 21" stroke="#1e961e" strokeWidth="2" />
    </Icon>
  ),
  cursor: (
    <Icon>
      <path d="M8 3V21L12 17L15 24L18 22L15 16H20Z" fill="#505050" />
    </Icon>
  ),
  cross: (
    <Icon>
      <path d="M13 2V11M13 15V24M2 13H11M15 13H24" stroke="#5a5a5a" strokeWidth="2" />
    </Icon>
  ),
  vertical: (
    <Icon>
      <path d="M13 3V23" stroke="#5a5a5a" strokeWidth="2" />
    </Icon>
  ),
  horizontal: (
    <Icon>
      <path d="M4 13H22" stroke="#5a5a5a" strokeWidth="2" />
    </Icon>
  ),
  trend: (
    <Icon>
      <path d="M4 23L22 5" stroke="#5a5a5a" strokeWidth="2" />
    </Icon>
  ),
  channel: (
    <Icon>
      <path d="M1 15L15 4M4 22L22 8M5 9L8 20M10 6L13 17M15 3L17 13M20 2L18 12" stroke="#5a5a5a" strokeWidth="2" />
      <path d="M24 19H19V25H24M19 22H23" stroke="#464646" strokeWidth="1.5" />
    </Icon>
  ),
  fibo: (
    <Icon>
      <path d="M3 3H23M3 8H23M3 14H23M3 20H16" stroke="#5a5a5a" strokeWidth="2" strokeDasharray="2 1" />
      <path d="M19 26V19H24M19 22H23" stroke="#464646" strokeWidth="1.5" />
    </Icon>
  ),
  arrows: (
    <Icon>
      <path d="M8 3L14 9H10V12H6V9H2ZM18 24L12 18H16V14H20V18H24Z" fill="#505050" />
      <path d="M5 15L9 19L16 10" stroke="#505050" strokeWidth="2" />
    </Icon>
  ),
};

const Grip = () => <span className="w-[5px] h-7 bg-[repeating-linear-gradient(180deg,#a0a0a0_0_1px,#f0f0f0_1px_3px)]" />;
const Separator = () => <span className="w-[5px] h-8 border-l border-[#a0a0a0]" />;
const Caret = () => <span className="border-x-[5px] border-x-transparent border-t-[5px] border-t-black" />;

const ToolButton = ({ label, pressed, children }: { label: string; pressed?: boolean; children: React.ReactNode }) => (
  <button
    type="button"
    aria-label={label}
    className={`flex items-center justify-center w-[38px] h-[34px] text-[15px] text-[#505050] ${
      pressed ? 'bg-[#f8f8f8] border-t-2 border-l-2 border-[#a0a0a0]' : ''
    }`}
  >
    {children}
  </button>
);

const DropButton = ({ label, children }: { label: string; children: React.ReactNode }) => (
  <button type="button" aria-label={label} className="flex items-center gap-[5px] w-[52px] h-[34px] pl-[6px]">
    {children}
    <Caret />
  </button>
);

const TitleBar = () => (
  <header className="flex items-center h-[34px] bg-[#f3f3f2] text-black">
    <div className="w-[219px] h-[27px] ml-px bg-white border-[3px] border-[#f00010] shadow-[2px_3px_4px_#606060]" />
    <h1 className="text-[17px]">-Live05 - Raw Trading Ltd - [XAUUSD,M1]</h1>
    <div className="flex ml-auto">
      <button type="button" aria-label="Minimize" className="flex items-center justify-center w-[70px] h-8">
        <Icon className="size-4"><path d="M0 13H26" stroke="black" strokeWidth="2" /></Icon>
      </button>
      <button type="button" aria-label="Restore" className="flex items-center justify-center w-[70px] h-8">
        <Icon className="size-4">
          <rect x="1" y="7" width="18" height="18" rx="3" stroke="black" strokeWidth="2.5" />
          <path d="M6 2H20Q25 2 25 7V20" stroke="black" strokeWidth="2.5" />
        </Icon>
      </button>
      <button type="button" aria-label="Close" className="flex items-center justify-center w-[72px] h-8">
        <Icon className="size-4"><path d="M1 1L25 25M25 1L1 25" stroke="black" strokeWidth="2.5" /></Icon>
      </button>
    </div>
  </header>
);

const MenuBar = () => (
  <nav className="flex items-center h-8 pl-2 border-b border-[#a0a0a0] text-[17px] text-[#141414]">
    <Icon className="size-[22px]">
      <rect x="1" y="2" width="18" height="14" rx="2" fill="#fff" stroke="#5a96e6" strokeWidth="2" />
      <rect x="6" y="10" width="19" height="14" rx="2" fill="#fff" stroke="#3c82dc" strokeWidth="2" />
      <path d="M9 15L12 20L15 14L18 20L21 15" stroke="#3c82dc" strokeWidth="2" />
    </Icon>
    {['Plik', 'Widok', 'Wstaw', 'Wykresy', 'Narzędzia', 'Okno', 'Pomoc'].map((item) => (
      <button key={item} type="button" className="px-[13px]">
        {item}
      </button>
    ))}
    <div className="flex gap-[5px] ml-auto mr-[3px]">
      <button type="button" aria-label="Minimize chart" className="flex items-center justify-center size-6 bg-white">
        <Icon className="size-4"><path d="M6 20H20" stroke="#78909c" strokeWidth="5" /></Icon>
      </button>
      <button type="button" aria-label="Restore chart" className="flex items-center justify-center size-6 bg-white">
        <Icon className="size-4">
          <path d="M8 8V3H24V14H20" stroke="#78909c" strokeWidth="4" />
          <rect x="3" y="11" width="15" height="11" stroke="#78909c" strokeWidth="3" />
        </Icon>
      </button>
      <button type="button" aria-label="Close chart" className="flex items-center justify-center size-6 bg-white">
        <Icon className="size-4"><path d="M4 4L22 22M22 4L4 22" stroke="#78909c" strokeWidth="6" /></Icon>
      </button>
    </div>
  </nav>
);

const MainToolbar = () => (
  <div className="flex items-center h-[42px]">
    <div className="flex items-center gap-1 h-[42px] px-[3px] border-b-2 border-r-2 border-[#b4b4b4]">
      <Grip />
      <DropButton label="New chart">{icons.newChart}</DropButton>
      <DropButton label="Profiles">{icons.profiles}</DropButton>
      <Separator />
      <ToolButton label="Market watch">{icons.market}</ToolButton>
      <ToolButton label="Data window">{icons.crosshair}</ToolButton>
      <ToolButton label="Navigator">{icons.navigator}</ToolButton>
      <ToolButton label="Terminal">{icons.terminal}</ToolButton>
      <ToolButton label="Strategy tester">{icons.tester}</ToolButton>
      <Separator />
      <button type="button" className="flex items-center gap-1 w-[156px] h-[34px] pl-[6px] text-[17px] text-black whitespace-nowrap">
        {icons.order}
        Nowe zlecenie
      </button>
      <ToolButton label="MetaEditor">{icons.gold}</ToolButton>
      <ToolButton label="Virtual hosting">{icons.cloud}</ToolButton>
      <ToolButton label="Signals">{icons.signal}</ToolButton>
      <button
        type="button"
        className="flex items-center gap-1 w-[143px] h-[34px] pl-[3px] bg-[#f8f8f8] border-t-2 border-l-2 border-[#a0a0a0] text-[17px] text-black whitespace-nowrap"
      >
        {icons.robot}
        AutoTrading
      </button>
    </div>
    <div className="flex items-center gap-1 h-[42px] px-[3px] border-b-2 border-r-2 border-[#b4b4b4]">
      <Grip />
      <ToolButton label="Bar chart">{icons.bars}</ToolButton>
      <ToolButton label="Candlesticks">{icons.candles}</ToolButton>
      <ToolButton label="Line chart" pressed>{icons.line}</ToolButton>
      <Separator />
      <ToolButton label="Zoom in"><Magnifier plus /></ToolButton>
      <ToolButton label="Zoom out"><Magnifier /></ToolButton>
      <ToolButton label="Tile windows">{icons.tile}</ToolButton>
      <Separator />
      <ToolButton label="Auto scroll" pressed>{icons.scroll}</ToolButton>
      <ToolButton label="Chart shift" pressed>{icons.shift}</ToolButton>
      <Separator />
      <DropButton label="Indicators">{icons.indicators}</DropButton>
      <DropButton label="Periods">{icons.clock}</DropButton>
      <DropButton label="Templates">{icons.template}</DropButton>
    </div>
    <div className="flex items-center gap-6 ml-auto mr-2">
      <button type="button" aria-label="Search">
        <Icon className="size-5">
          <path d="M2 24L11 15" stroke="#3c78dc" strokeWidth="6" />
          <circle cx="17" cy="9" r="7" fill="#f5faff" stroke="#3c78dc" strokeWidth="3" />
        </Icon>
      </button>
      <button type="button" aria-label="Chat">
        <svg viewBox="0 0 32 22" className="w-8 h-[22px]" fill="#f5f5f5" stroke="#8c8c8c" strokeWidth="1.5">
          <path d="M21 1C28 1 31 4 31 8C31 11 29 13 27 14L28 18L23 15C15 15 11 12 11 8C11 4 15 1 21 1Z" />
          <path d="M9 8C14 8 17 10 17 13C17 16 14 18 9 18L4 21L5 17C2 16 1 15 1 13C1 10 4 8 9 8Z" />
        </svg>
      </button>
    </div>
  </div>
);

const DrawToolbar = () => (
  <div className="flex items-center h-10 border-b border-[#808080]">
    <div className="flex items-center gap-1 h-[39px] px-[3px] border-r-2 border-[#b4b4b4]">
      <Grip />
      <ToolButton label="Cursor" pressed>{icons.cursor}</ToolButton>
      <ToolButton label="Crosshair">{icons.cross}</ToolButton>
      <Separator />
      <ToolButton label="Vertical line">{icons.vertical}</ToolButton>
      <ToolButton label="Horizontal line">{icons.horizontal}</ToolButton>
      <ToolButton label="Trendline">{icons.trend}</ToolButton>
      <ToolButton label="Equidistant channel">{icons.channel}</ToolButton>
      <ToolButton label="Fibonacci retracement">{icons.fibo}</ToolButton>
      <ToolButton label="Text"><span className="text-[19px] font-semibold">A</span></ToolButton>
      <ToolButton label="Text label">
        <span className="flex items-center justify-center size-5 border-2 border-dotted border-[#646464] text-[16px] font-bold">T</span>
      </ToolButton>
      <DropButton label="Arrows">{icons.arrows}</DropButton>
    </div>
    <div className="flex items-center gap-1 h-[39px] px-[3px] border-r-2 border-[#b4b4b4]">
      <Grip />
      {['M1', 'M5', 'M15', 'M30', 'H1', 'H4', 'D1', 'W1', 'MN'].map((period) => (
        <ToolButton key={period} label={period} pressed={period === 'M1'}>
          {period}
        </ToolButton>
      ))}
    </div>
  </div>
);

const ClockBadge = ({ city, time, className }: { city: string; time: string; className: string }) => (
  <div className={`flex items-center justify-center gap-3 h-6 ${className}`}>
    <span>{city}</span>
    <span>{time}</span>
  </div>
);

const TopStrip = () => (
  <div className="absolute left-2 top-[7px] flex items-center gap-[2px] font-['Inter',sans-serif] text-[21px] leading-6 font-black text-white whitespace-nowrap">
    <div className="flex items-center gap-[7px] w-[115px] pl-1 font-['Noto_Sans',sans-serif] text-[15px] font-normal text-[#a9a9a9]">
      <span className="border-x-[5px] border-x-transparent border-t-[6px] border-t-[#c0c0c0]" />
      XAUUSD,M1
    </div>
    <ClockBadge city="HONG KONG" time="23:48" className="w-[233px] bg-[#992324]" />
    <ClockBadge city="LONDON" time="16:48" className="w-[199px] bg-[#0078d7]" />
    <ClockBadge city="NEW YORK" time="11:48" className="w-[224px] bg-[#0078d7]" />
    <div className="w-[406px] h-6 mx-[7px] text-center bg-[#3cb371] text-[#1e2d37]">PRICE: ABOVE THE DAILY OPEN LINE</div>
    <div className="flex items-center w-[931px] h-7 bg-[#314b78] font-['Liberation_Sans',sans-serif] text-[19px] font-normal italic">
      <span className="flex-1 pl-[70px] text-center text-[#d2d7e1]">news reader</span>
      <div className="flex items-center gap-4 w-[70px] h-7 pl-2 bg-[#34508a]">
        <button type="button" aria-label="Collapse" className="border-x-[7px] border-x-transparent border-b-8 border-b-white" />
        <button type="button" aria-label="Close news" className="flex items-center justify-center w-[23px] h-[19px] border-2 border-white">
          <Icon className="size-3"><path d="M3 3L23 23M23 3L3 23" stroke="white" strokeWidth="4" /></Icon>
        </button>
      </div>
    </div>
  </div>
);

const Heading = () => (
  <div className="absolute left-[183px] top-[38px] w-[515px] flex flex-col items-end font-['Inter',sans-serif] font-black whitespace-nowrap">
    <h2 className="text-[86px] leading-[80px] text-[#ff8c00] [text-shadow:2px_2px_0_#111]">XAUUSD M1</h2>
    <p className="text-[30px] leading-7 text-[#947a53] [text-shadow:2px_2px_0_#111]">Carlsberg Don't Do Charts</p>
  </div>
);

const MarketPanel = () => (
  <section className="absolute right-[89px] top-[30px] flex flex-col w-[142px] h-[370px] px-2 pt-[9px] bg-[#1e2833] border-2 border-[#f0f0f0] font-['DejaVu_Sans_Mono',monospace] text-[24px] leading-6 font-bold whitespace-nowrap">
    <h3 className="font-['Roboto',sans-serif] text-[29px] leading-8 font-black text-center text-white">XAUUSD</h3>
    <p className="font-['Roboto',sans-serif] text-[31px] leading-9 font-black text-center text-[#00bfff]">2579.9</p>
    <p className="text-[22px] leading-6 text-center text-[#c0c0c0]">SPD:0.6</p>
    <p className="pr-2 text-right text-[#00ff00]">0:6</p>
    <p className="text-[20px] leading-6 text-center text-[#00bfff] font-normal">DAILY OPEN</p>
    <p className="text-[29px] leading-[26px] text-center text-[#00bfff] font-normal">2579.7</p>
    <p className="flex justify-between text-[#00bfff]"><span>PFO</span><span>2</span></p>
    <p className="flex justify-between text-[#c0c0c0]"><span>HiLo</span><span>144</span></p>
    <p className="flex justify-between text-[#ff82ff]"><span>Avg</span><span>295</span></p>
    <p className="font-['Inter',sans-serif] text-[34px] leading-[42px] font-black text-right text-[#696969]">32.18</p>
    <div className="flex justify-between font-['Liberation_Sans',sans-serif] text-[20px] font-normal text-white">
      {['M1', 'M5', '15'].map((period) => (
        <button key={period} type="button" className="size-9 bg-[#e05ae0]">
          {period}
        </button>
      ))}
    </div>
    <p className="font-['Inter',sans-serif] text-[30px] leading-[42px] font-black text-right text-[#00bfff]">1%</p>
  </section>
);

const AccountPanel = () => (
  <section className="absolute right-[90px] bottom-[147px] flex flex-col w-[142px] h-[292px] pt-2 px-1 bg-[#1e2833] border-2 border-[#f0f0f0] font-['Liberation_Sans',sans-serif] text-[28px] text-[#828282] text-right whitespace-nowrap">
    <h3 className="font-['Roboto',sans-serif] text-[29px] leading-10 font-black text-center text-white">XAUUSD</h3>
    <p className="leading-[42px]">OpenPips</p>
    <p className="pr-1 text-[32px] leading-10">0.00</p>
    <p className="leading-[46px]">OpenPos</p>
    <p className="text-[26px] leading-8">0.00%</p>
    <p className="leading-[42px] text-center">Daily P/L</p>
    <p className="text-[26px] leading-8 text-[#00ffff]">13.92%</p>
  </section>
);

const ChartButtons = () => (
  <div className="absolute left-2 bottom-[132px] flex font-['Inter',sans-serif] text-[32px] leading-9 font-black text-white whitespace-nowrap">
    <button type="button" className="w-[243px] bg-[#006400]">UP SQUARE</button>
    <button type="button" className="w-[242px] ml-3 bg-[#006400]">UP ARROW</button>
    <button type="button" className="w-[318px] ml-[136px] rounded-sm bg-[#907c56] text-[#23282c]">AUTO-SCROLL OFF</button>
    <span className="ml-[14px] text-[#907c56] [text-shadow:2px_2px_0_#111]">XU v14m [Echo]</span>
  </div>
);

const App = () => (
  <div className="min-h-screen overflow-x-hidden bg-[#f0f0f0] font-['Open_Sans',sans-serif]">
    <TitleBar />
    <MenuBar />
    <MainToolbar />
    <DrawToolbar />
    <main className="relative">
      <Chart />
      <TopStrip />
      <Heading />
      <MarketPanel />
      <AccountPanel />
      <ChartButtons />
    </main>
  </div>
);

export default App;
